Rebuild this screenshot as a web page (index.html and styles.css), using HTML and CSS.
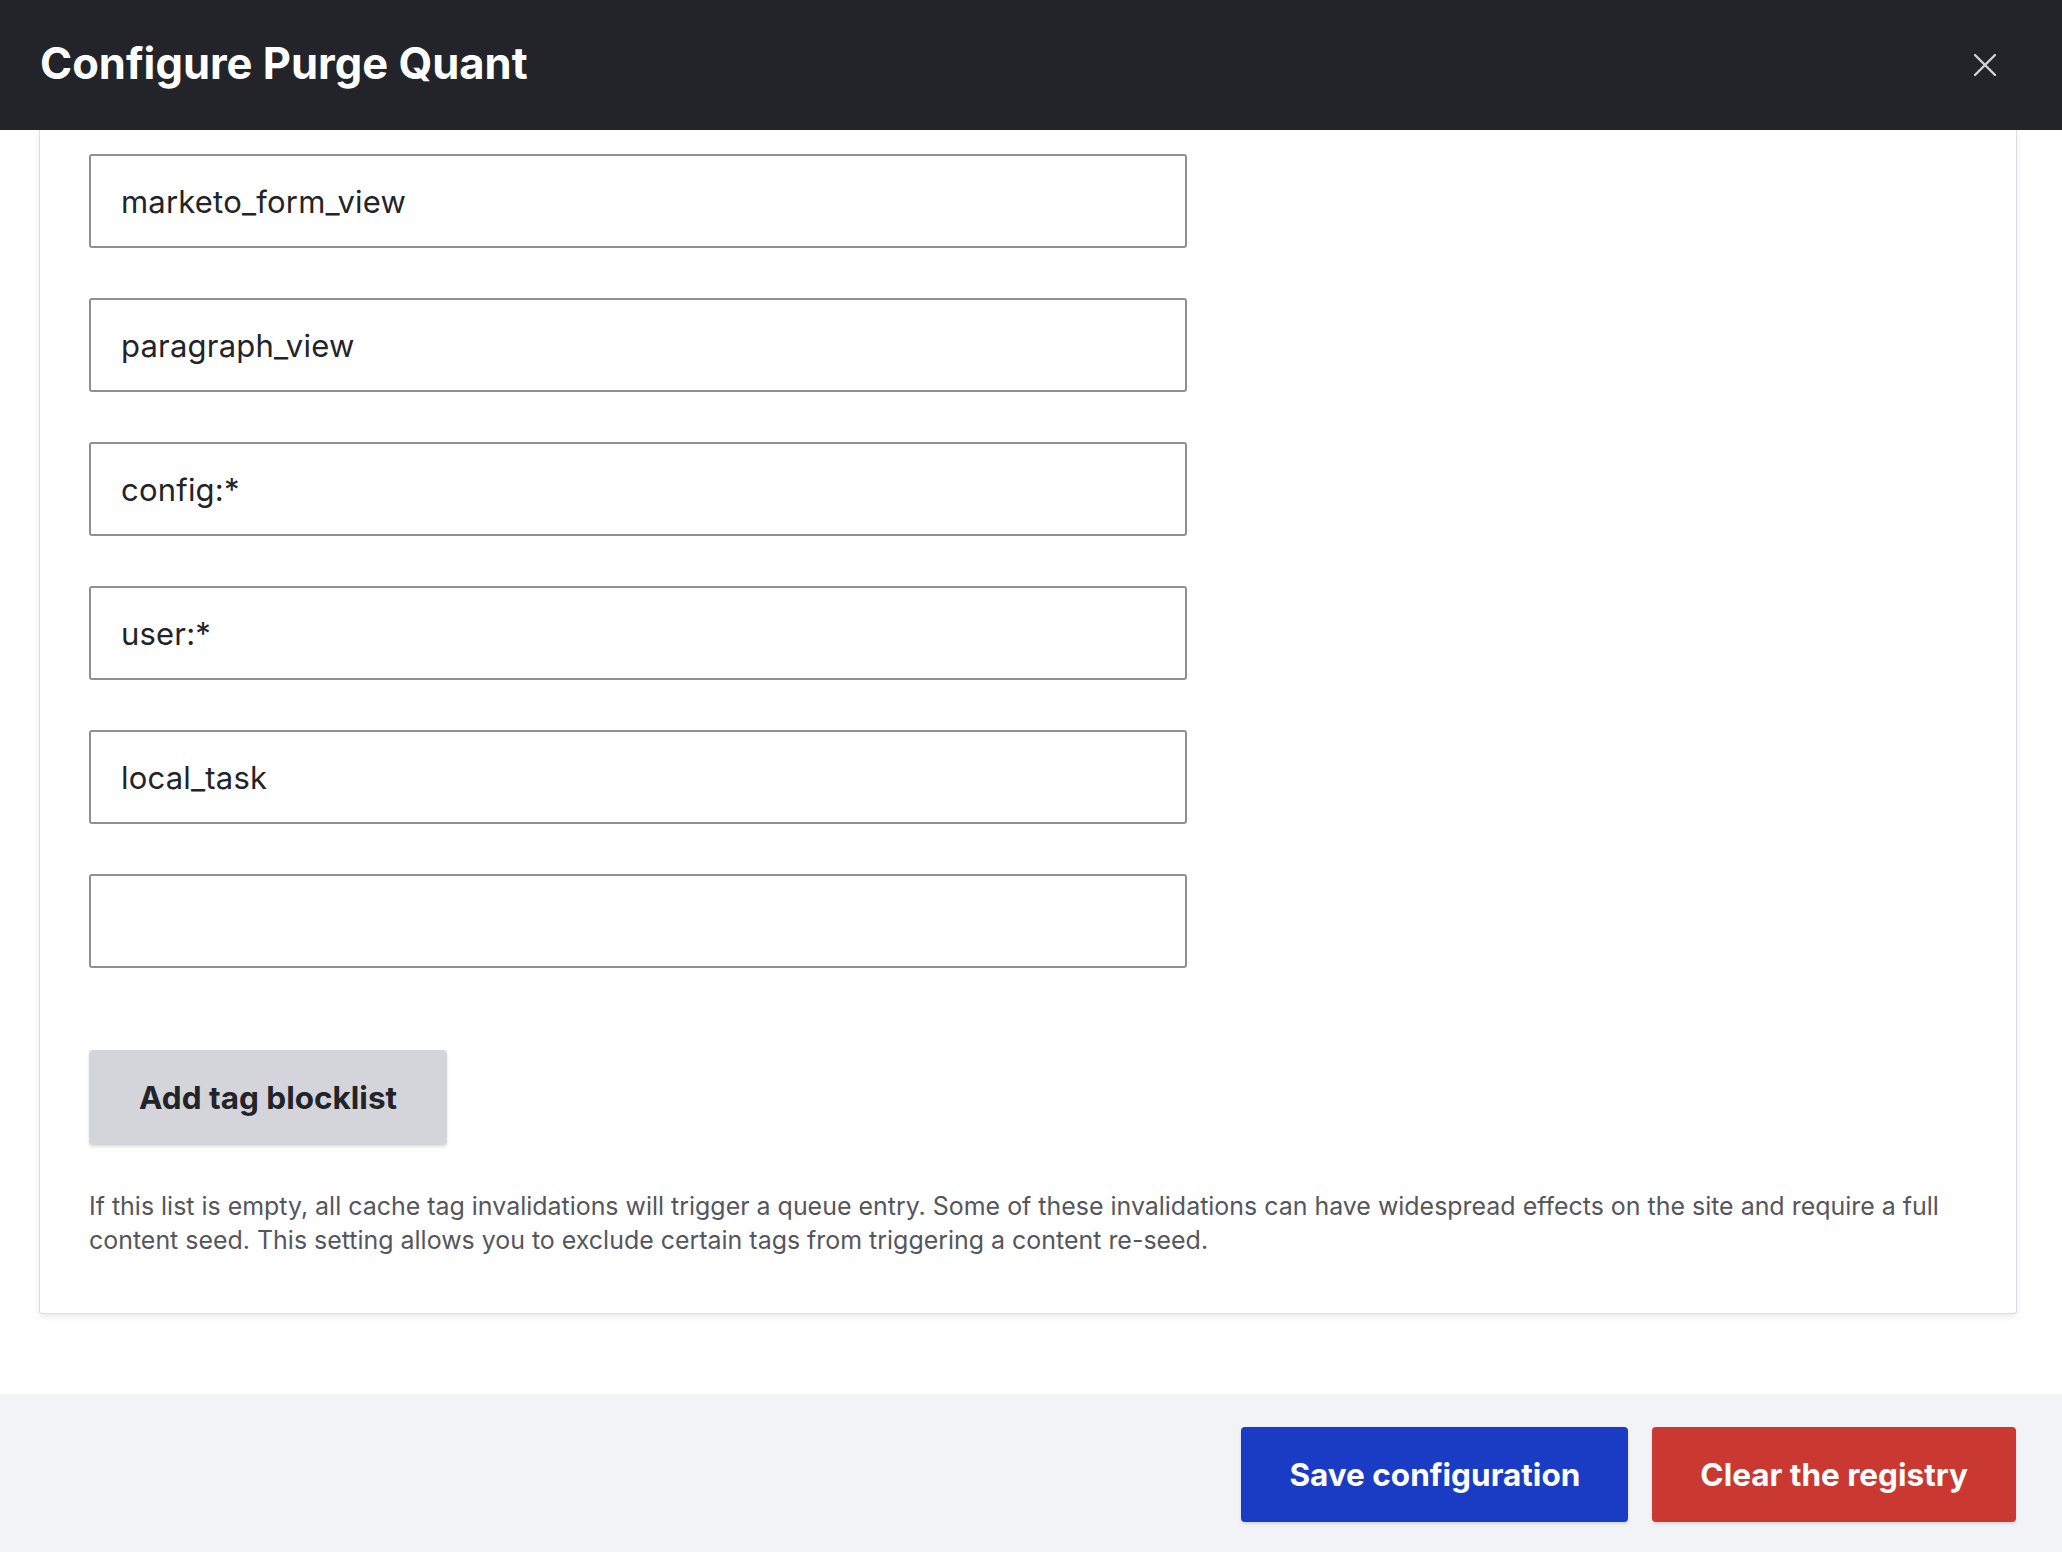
FILE: index.html
```html
<!DOCTYPE html>
<html lang="en">
<head>
<meta charset="utf-8">
<title>Configure Purge Quant</title>
<link rel="stylesheet" href="styles.css">
</head>
<body>
<div class="dialog">
  <header class="dialog-header">
    <h1 class="dialog-title">Configure Purge Quant</h1>
    <button class="close-btn" aria-label="Close">
      <svg width="22" height="22" viewBox="0 0 22 22"><path d="M1 1 L21 21 M21 1 L1 21" stroke="#d4d4d8" stroke-width="2.4" stroke-linecap="round" fill="none"/></svg>
    </button>
  </header>
  <main class="dialog-body">
    <section class="card">
      <div class="tag-list">
        <input class="tag-input" type="text" value="marketo_form_view">
        <input class="tag-input" type="text" value="paragraph_view">
        <input class="tag-input" type="text" value="config:*">
        <input class="tag-input" type="text" value="user:*">
        <input class="tag-input" type="text" value="local_task">
        <input class="tag-input" type="text" value="">
      </div>
      <button class="btn btn-secondary">Add tag blocklist</button>
      <p class="description">If this list is empty, all cache tag invalidations will trigger a queue entry. Some of these invalidations can have widespread effects on the site and require a full content seed. This setting allows you to exclude certain tags from triggering a content re-seed.</p>
    </section>
  </main>
  <footer class="dialog-footer">
    <button class="btn btn-primary">Save configuration</button>
    <button class="btn btn-danger">Clear the registry</button>
  </footer>
</div>
</body>
</html>
```
FILE: styles.css
```css
* { box-sizing: border-box; }
html, body { margin: 0; padding: 0; }
body {
  width: 2062px;
  height: 1552px;
  overflow: hidden;
  background: #ffffff;
  font-family: Inter, "Liberation Sans", sans-serif;
  color: #232429;
}
.dialog {
  display: flex;
  flex-direction: column;
  height: 1552px;
}
.dialog-header {
  height: 130px;
  flex: none;
  background: #232429;
  display: flex;
  align-items: center;
  justify-content: space-between;
  padding: 0 66px 0 40px;
}
.dialog-title {
  margin: 0;
  color: #ffffff;
  font-size: 43.5px;
  font-weight: 700;
  padding-bottom: 4px;
}
.close-btn {
  background: none;
  border: 0;
  padding: 0;
  width: 22px;
  height: 22px;
  display: flex;
}
.dialog-body {
  flex: 1;
  overflow: hidden;
  padding: 0 45px 0 39px;
}
.card {
  background: #fff;
  border: 1px solid #dcdce1;
  border-top: 0;
  border-radius: 0 0 3px 3px;
  box-shadow: 0 3px 6px rgba(0, 0, 0, 0.08);
  padding: 24px 48px 56px 49px;
  display: flex;
  flex-direction: column;
  align-items: flex-start;
}
.tag-list {
  display: flex;
  flex-direction: column;
  gap: 50px;
}
.tag-input {
  width: 1098px;
  height: 94px;
  border: 2px solid #909197;
  border-radius: 3px;
  padding: 0 30px;
  font-family: Inter, "Liberation Sans", sans-serif;
  font-size: 31px;
  letter-spacing: 0.2px;
  color: #232429;
  background: #fff;
  outline: none;
}
.btn {
  border: 0;
  border-radius: 4px;
  height: 95px;
  padding: 0 48px;
  font-family: Inter, "Liberation Sans", sans-serif;
  font-size: 31.5px;
  font-weight: 700;
  box-shadow: 0 2px 3px rgba(0, 0, 0, 0.12);
}
.btn-secondary {
  margin-top: 82px;
  padding: 0 50px;
  background: #d4d5da;
  color: #232429;
}
.description {
  margin: 44px 0 0;
  font-size: 24.95px;
  line-height: 34px;
  color: #55565c;
}
.dialog-footer {
  height: 158px;
  flex: none;
  background: #f2f3f7;
  display: flex;
  justify-content: flex-end;
  align-items: flex-start;
  gap: 24px;
  padding: 33px 46px 0 0;
}
.btn-primary {
  background: #1a3cc5;
  color: #fff;
}
.btn-danger {
  background: #c93831;
  color: #fff;
}
```
